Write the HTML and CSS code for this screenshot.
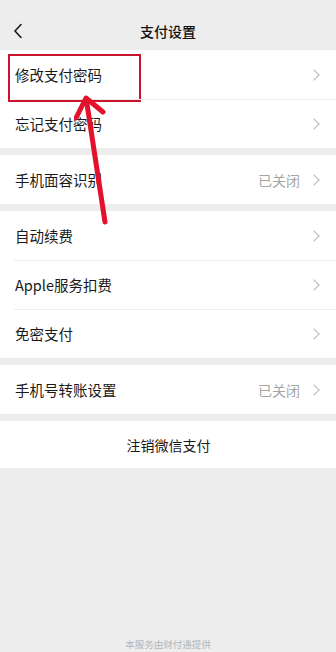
FILE: index.html
```html
<!DOCTYPE html>
<html lang="zh-CN">
<head>
  <meta charset="UTF-8" />
  <meta name="viewport" content="width=device-width, initial-scale=1.0"/>
  <title>支付设置</title>
  <link rel="stylesheet" href="styles.css">
</head>
<body>

  <!-- Header -->
  <header class="topbar">
    <svg class="back" width="10" height="16" viewBox="0 0 10 16">
      <path d="M8 1.5 L2 8 L8 14.5" fill="none" stroke="#1a1a1a" stroke-width="1.6" stroke-linecap="round" stroke-linejoin="round"/>
    </svg>
    <h1>支付设置</h1>
  </header>

  <main class="settings">
    <section class="group">
      <div class="row highlight"><span class="label">修改支付密码</span><span class="arrow"></span></div>
      <div class="row"><span class="label">忘记支付密码</span><span class="arrow"></span></div>
    </section>

    <section class="group">
      <div class="row"><span class="label">手机面容识别</span><span class="value">已关闭</span><span class="arrow"></span></div>
    </section>

    <section class="group">
      <div class="row"><span class="label">自动续费</span><span class="arrow"></span></div>
      <div class="row"><span class="label">Apple服务扣费</span><span class="arrow"></span></div>
      <div class="row"><span class="label">免密支付</span><span class="arrow"></span></div>
    </section>

    <section class="group">
      <div class="row"><span class="label">手机号转账设置</span><span class="value">已关闭</span><span class="arrow"></span></div>
    </section>

    <section class="group">
      <div class="row center">注销微信支付</div>
    </section>
  </main>

  <footer class="footer">本服务由财付通提供</footer>

  <!-- annotation arrow -->
  <svg class="pointer" width="40" height="140" viewBox="0 0 40 140">
    <path d="M31 128 L13 10" stroke="#e3122c" stroke-width="5" stroke-linecap="round" fill="none"/>
    <path d="M2 24 L12 4 L29 18" stroke="#e3122c" stroke-width="5" stroke-linecap="round" stroke-linejoin="round" fill="none"/>
  </svg>

</body>
</html>
```

FILE: styles.css
```css
* {
  margin: 0;
  padding: 0;
  box-sizing: border-box;
}

body {
  width: 336px;
  height: 652px;
  background-color: #ededed;
  color: #1a1a1a;
  font-family: "Noto Sans CJK SC", "Liberation Sans", sans-serif;
  position: relative;
  overflow: hidden;
}

.topbar {
  height: 50px;
  display: flex;
  align-items: center;
  justify-content: center;
  position: relative;
  padding-top: 11px;
}

.topbar .back {
  position: absolute;
  left: 13px;
  top: 23px;
}

.topbar h1 {
  font-size: 14px;
  font-weight: 500;
  color: #111;
}

.group {
  background-color: #fff;
  margin-bottom: 7px;
}

.row {
  height: 49px;
  display: flex;
  align-items: center;
  padding: 0 14px 0 15px;
  font-size: 14.5px;
  position: relative;
}

.row + .row::before {
  content: "";
  position: absolute;
  top: 0;
  left: 14px;
  right: 0;
  border-top: 1px solid #ececec;
}

.row .label {
  flex: 1;
}

.row .value {
  color: #a6a6a6;
  font-size: 14px;
  margin-right: 10px;
}

.arrow {
  width: 8px;
  height: 8px;
  border-top: 1.5px solid #b8b8b8;
  border-right: 1.5px solid #b8b8b8;
  transform: rotate(45deg);
  margin-right: 4px;
}

.row.center {
  justify-content: center;
  font-size: 14px;
  height: 47px;
}

.highlight::after {
  content: "";
  position: absolute;
  left: 8px;
  top: 4px;
  width: 129px;
  height: 44px;
  border: 2px solid #c9142b;
}

.footer {
  position: absolute;
  bottom: 1px;
  left: 0;
  right: 0;
  text-align: center;
  font-size: 9.5px;
  color: #b5b5b5;
}

.pointer {
  position: absolute;
  left: 74px;
  top: 94px;
}
```
